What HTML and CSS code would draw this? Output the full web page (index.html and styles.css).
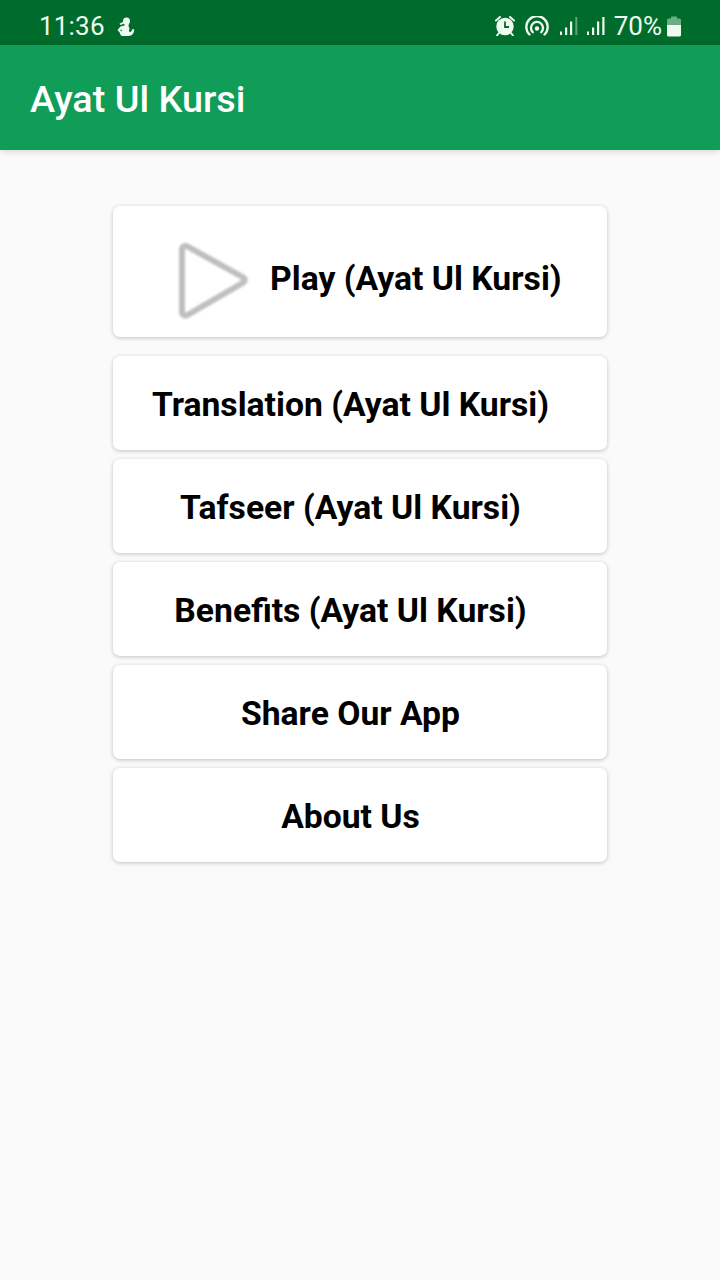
FILE: index.html
```html
<!DOCTYPE html>
<html lang="en">

<head>
  <meta charset="UTF-8">
  <title>Ayat Ul Kursi</title>
  <link rel="stylesheet" href="styles.css">
</head>

<body>
  <div class="status-bar">
    <span class="time">11:36</span>
    <svg class="figure-icon" width="18" height="20" viewBox="0 0 18 20" fill="#effaf0">
      <circle cx="9.500" cy="4" r="3.500" />
      <path d="M2.500 6.800 7 4.200 7.500 6.500 3.500 8z" />
      <path d="M7.500 6H12l-.5 3 1 2.500-.7 2.500 1.200 1.200q2-.7 2.500-3.200l1.800.5Q17 18.500 11.500 19H5Q3 18.500 3 16L.5 13 3.500 9.500 7.500 8.500z" />
      <path d="M3 13.200l1.500-1 .3 2.300z" fill="#006c2c" />
    </svg>
    <div class="status-right">
      <svg width="20" height="20" viewBox="0 0 20 20">
        <circle cx="10" cy="10.500" r="8.700" fill="#effaf0" />
        <path d="M1 4.500 5 1M19 4.500 15 1M4 17l-2 2.500M16 17l2 2.500" stroke="#effaf0" stroke-width="2" stroke-linecap="round" />
        <path d="M10 5.500v5.500h4" fill="none" stroke="#006c2c" stroke-width="1.800" />
      </svg>
      <svg class="cast-icon" width="24" height="21" viewBox="0 0 24 21" fill="none" stroke="#effaf0" stroke-width="2.300" stroke-linecap="round">
        <path d="M4.500 18.500A10.700 10.700 0 1 1 19.500 18.500" />
        <path d="M7.800 16.200A6 6 0 1 1 16.200 16.200" />
        <circle cx="12" cy="12.500" r="2.200" fill="#effaf0" stroke="none" />
      </svg>
      <svg class="signal-icon" width="18" height="20" viewBox="0 0 18 20" fill="#effaf0">
        <path d="M0 15.500h2V19H0zM5 11.500h2.200V19H5zM10 5.500h2.200V19H10z" />
        <path d="M15.300 1h2v18h-2z" opacity=".4" />
      </svg>
      <svg class="signal-icon second" width="18" height="20" viewBox="0 0 18 20" fill="#effaf0">
        <path d="M0 15.500h2V19H0zM5 11.500h2.200V19H5zM10 5.500h2.200V19H10zM15.300 1h2.200v18h-2.200z" />
      </svg>
      <span class="percent">70%</span>
      <svg width="14" height="21" viewBox="0 0 14 21" fill="#effaf0">
        <path d="M0 9V4q0-1.500 1.500-1.500H4V1q0-.5.5-.5h5q.5 0 .5.500v1.500h2.500Q14 2.500 14 4v5z" opacity=".45" />
        <path d="M0 9h14v10q0 1.500-1.500 1.500h-11Q0 20.500 0 19z" />
      </svg>
    </div>
  </div>

  <header class="app-bar">
    <h1>Ayat Ul Kursi</h1>
  </header>

  <main class="menu">
    <button class="card play">
      <svg class="play-icon" width="80" height="86" viewBox="0 0 80 86">
        <path d="M9 12Q10 7.500 14.500 9.500L69.500 40Q74 43 69.500 46L14.500 78Q10 80 9 75.500z" fill="none" stroke="#bfbfbf" stroke-width="6" stroke-linejoin="round" />
      </svg>
      <span>Play (Ayat Ul Kursi)</span>
    </button>
    <button class="card">Translation (Ayat Ul Kursi)</button>
    <button class="card">Tafseer (Ayat Ul Kursi)</button>
    <button class="card">Benefits (Ayat Ul Kursi)</button>
    <button class="card">Share Our App</button>
    <button class="card">About Us</button>
  </main>
</body>

</html>
```

FILE: styles.css
```css
* {
  box-sizing: border-box;
}

body {
  margin: 0;
  min-height: 1280px;
  background-color: #fafafa;
  font-family: Roboto, sans-serif;
}

.status-bar {
  display: flex;
  align-items: center;
  height: 45px;
  padding: 7px 39px 0 39px;
  background-color: #006c2c;
  color: #effaf0;
  font-size: 26px;
  line-height: 38px;
}

.time {
  letter-spacing: 0.2px;
}

.figure-icon {
  margin: 1px 0 0 12px;
}

.status-right {
  display: flex;
  align-items: center;
  margin-left: auto;
}

.cast-icon {
  margin-left: 10px;
}

.signal-icon {
  margin-left: 11px;
}

.signal-icon.second {
  margin-left: 9px;
}

.percent {
  margin: 0 5px 0 9px;
}

.app-bar {
  display: flex;
  align-items: center;
  height: 105px;
  padding: 2px 30px 0;
  background-color: #109d58;
  box-shadow: 0 1px 7px rgba(0, 0, 0, 0.17);
}

h1 {
  margin: 0;
  color: #fff;
  font-size: 37.8px;
  font-weight: 500;
}

.menu {
  display: flex;
  flex-direction: column;
  align-items: center;
  gap: 9px;
  padding-top: 56px;
}

.card {
  display: flex;
  align-items: center;
  justify-content: center;
  width: 494px;
  height: 94px;
  padding: 2px 19px 0 0;
  border: none;
  border-radius: 7px;
  background-color: #fff;
  box-shadow: 0 1px 4px rgba(0, 0, 0, 0.23);
  color: #000;
  font-family: Roboto, sans-serif;
  font-size: 33.7px;
  font-weight: 700;
  white-space: nowrap;
  cursor: pointer;
}

.play {
  justify-content: flex-start;
  height: 131px;
  margin-bottom: 10px;
  padding: 13px 0 0 60px;
}

.play-icon {
  margin: 4px 17px 0 0;
  filter: blur(0.8px);
}
```
